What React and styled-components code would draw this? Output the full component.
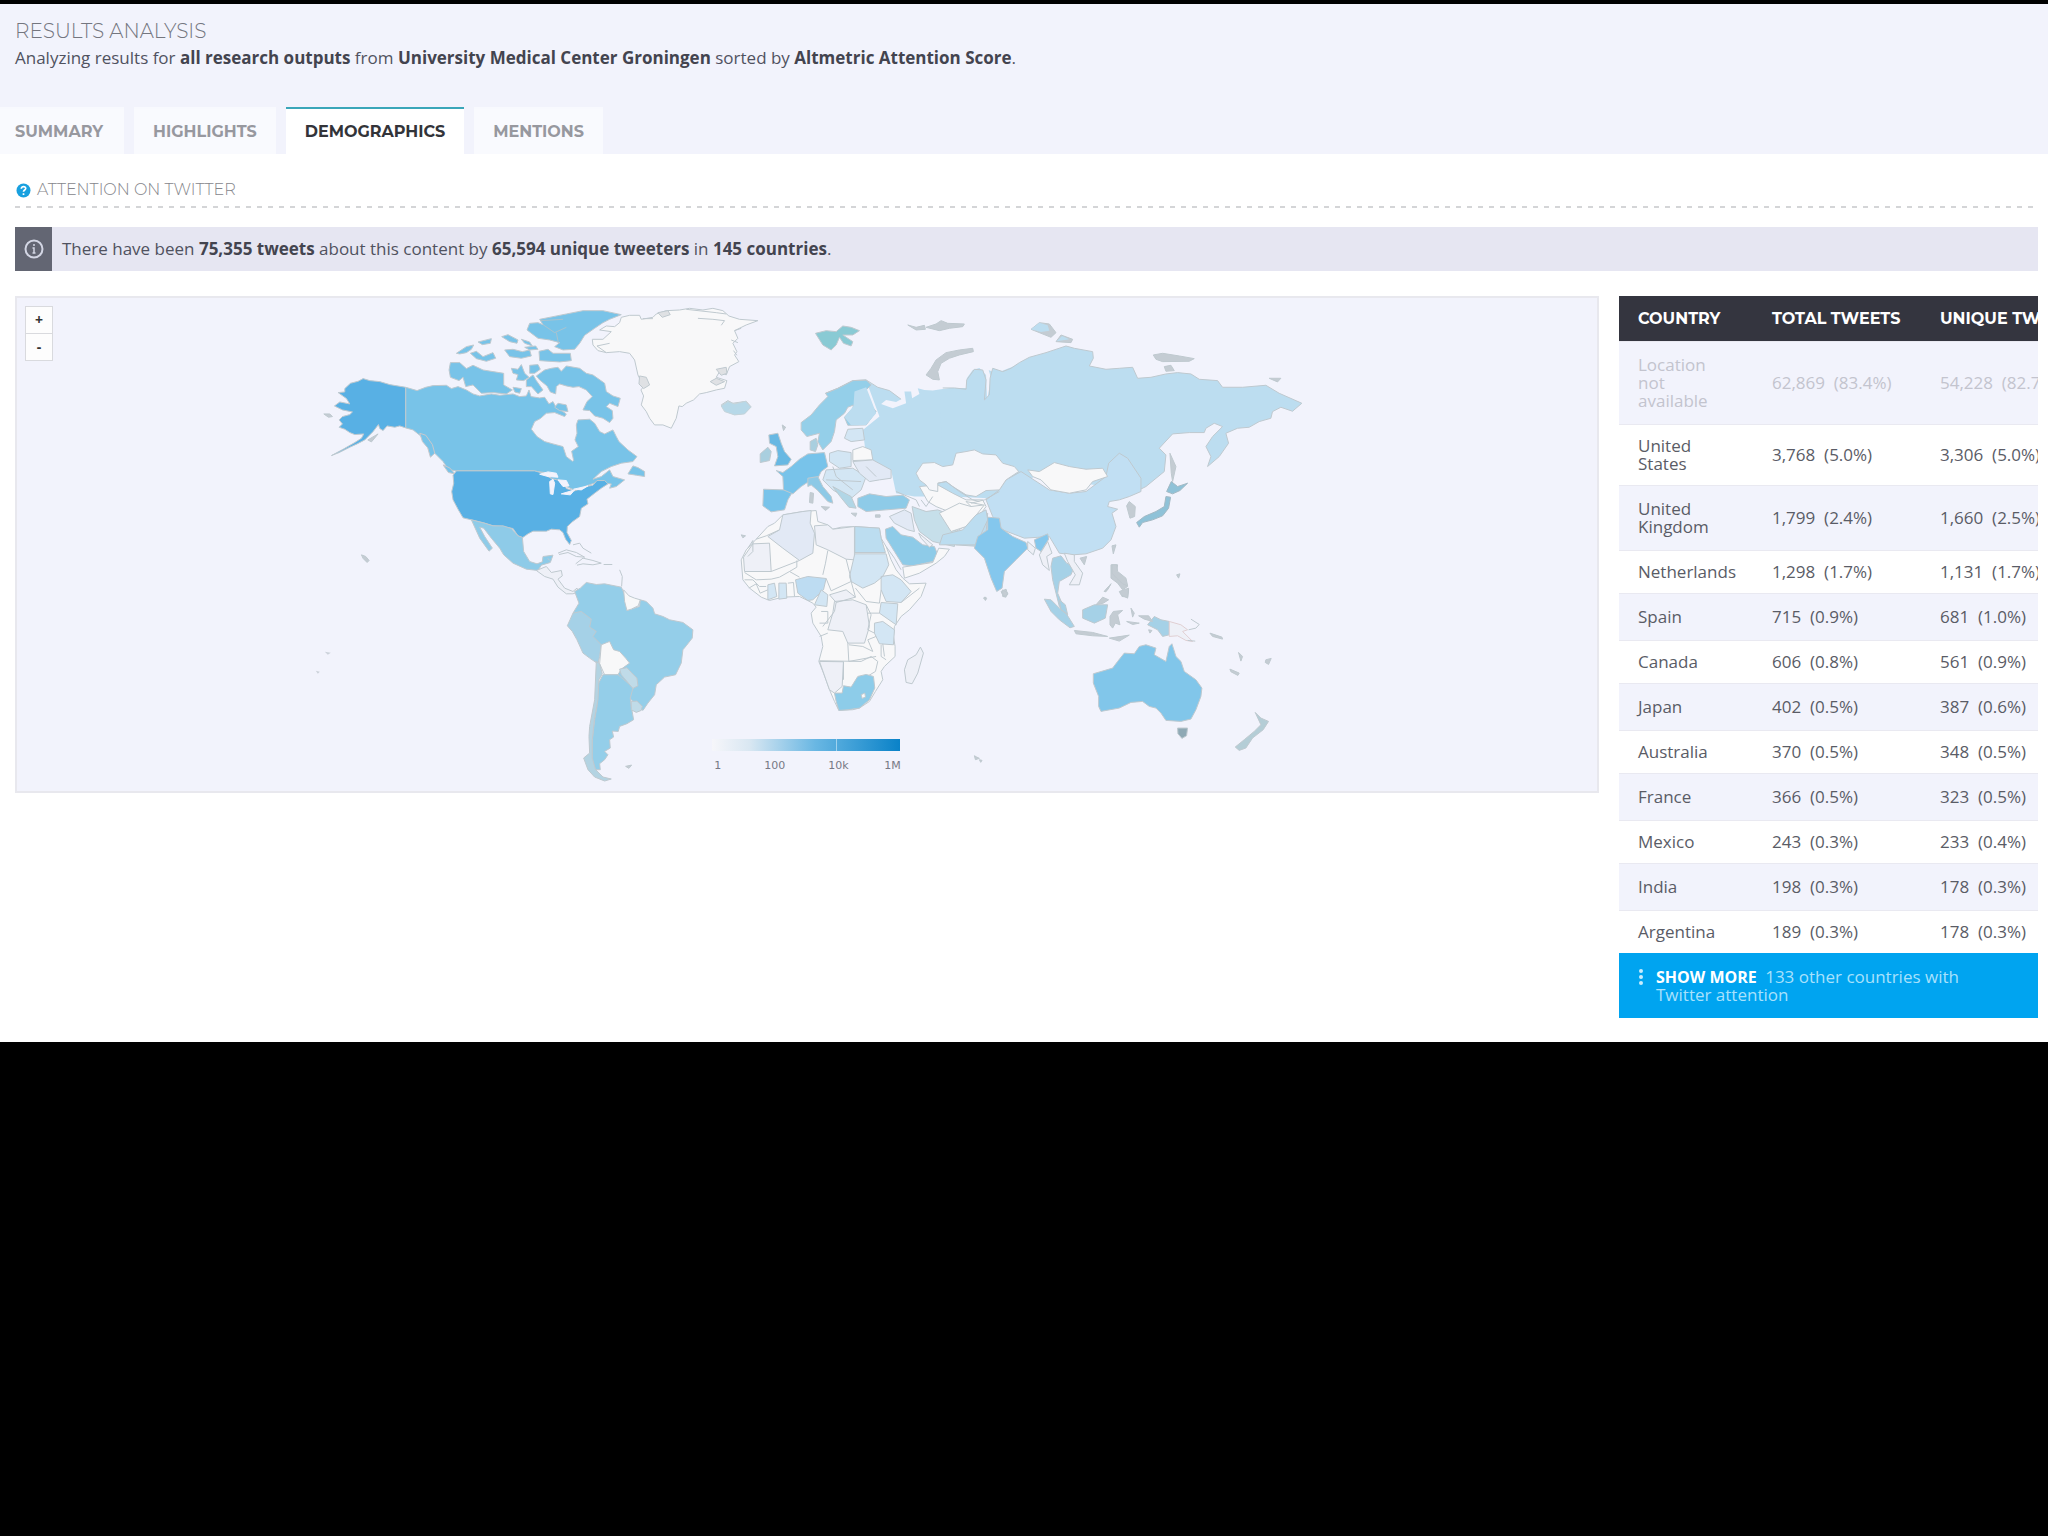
import React from "react";
import styled, { createGlobalStyle, css } from "styled-components";

const GlobalStyle = createGlobalStyle`
  *, *::before, *::after { box-sizing: border-box; }
  body {
    margin: 0;
    background: #000;
    color: #50525f;
    font-family: "Open Sans", "Noto Sans", sans-serif;
    font-size: 17px;
  }
`;

const display = css`
  font-family: Montserrat, Inter, "Open Sans", sans-serif;
`;

const Page = styled.div`
  margin-top: 4px;
  background: #fff;
`;

const Header = styled.header`
  background: #f2f3fc;
`;

const Intro = styled.div`
  padding: 14px 15px 35px;
`;

const Title = styled.h1`
  ${display}
  margin: 0;
  font-size: 20px;
  line-height: 26px;
  font-weight: 300;
  color: #74767f;
`;

const Text = styled.p`
  margin: 0;
  font-size: 17px;
  line-height: 28px;
  strong { font-weight: 700; color: #43444f; }
`;

const Tabs = styled.nav`
  display: flex;
  gap: 10px;
`;

const Tab = styled.a`
  ${display}
  height: 47px;
  padding: 0 19px;
  border-top: 2px solid ${(p) => (p.$active ? "#3aa6b9" : "#f8f9fe")};
  background: ${(p) => (p.$active ? "#fff" : "#f9fafe")};
  color: ${(p) => (p.$active ? "#333439" : "#97989f")};
  font-size: 16px;
  line-height: 45px;
  font-weight: 700;
  text-decoration: none;
  &:first-child { padding-left: 15px; padding-right: 21px; }
`;

const Main = styled.main`
  padding: 24px 10px 24px 15px;
`;

const SectionTitle = styled.h2`
  ${display}
  display: flex;
  align-items: center;
  gap: 6px;
  margin: 0;
  padding: 0 1px 4px;
  font-size: 16px;
  line-height: 24px;
  font-weight: 300;
  color: #85868b;
`;

const Divider = styled.div`
  height: 2px;
  background: repeating-linear-gradient(90deg, #d4d5d7 0 5px, transparent 5px 11px);
`;

const Notice = styled.div`
  display: flex;
  height: 44px;
  margin: 19px 0 25px;
  background: #e6e6f2;
`;

const NoticeBadge = styled.span`
  display: grid;
  place-items: center;
  width: 37px;
  background: #636673;
`;

const NoticeText = styled(Text)`
  padding: 8px 10px;
`;

const Columns = styled.div`
  display: grid;
  grid-template-columns: minmax(0, 1fr) 419px;
  gap: 20px;
  align-items: start;
`;

const MapPanel = styled.section`
  position: relative;
  background: #f2f3fc;
  border: 2px solid #e8e8ee;
  > svg { display: block; width: 100%; height: auto; }
`;

const ZoomControls = styled.div`
  position: absolute;
  top: 8px;
  left: 8px;
  display: flex;
  flex-direction: column;
`;

const ZoomButton = styled.button`
  width: 28px;
  height: 28px;
  margin-bottom: -1px;
  padding: 0;
  border: 1px solid #d9dade;
  background: #fdfdfd;
  color: #333;
  font: 700 14px/24px "Open Sans", sans-serif;
`;

const TablePanel = styled.section`
  overflow: hidden;
`;

const Table = styled.table`
  width: 480px;
  table-layout: fixed;
  border-collapse: collapse;
  line-height: 18px;
`;

const HeadCell = styled.th`
  ${display}
  width: ${(p) => p.$width};
  height: 45px;
  padding: 0 0 0 19px;
  background: #34353f;
  color: #fff;
  font-size: 16px;
  font-weight: 700;
  text-align: left;
  white-space: nowrap;
`;

const Row = styled.tr`
  color: ${(p) => (p.$muted ? "#c3c4ce" : "#5a5c66")};
  background: #fff;
  > * { padding: 12px 0 12px 19px; }
  &:nth-child(odd) {
    background: #f2f3fc;
    box-shadow: inset 0 1px #e9e9f1, inset 0 -1px #e9e9f1;
    > * { padding: 15px 0 15px 19px; }
  }
`;

const NameCell = styled.th`
  font-weight: 400;
  text-align: left;
  span { display: block; width: 90px; }
`;

const ValueCell = styled.td`
  white-space: pre;
`;

const ShowMore = styled.button`
  display: flex;
  align-items: flex-start;
  gap: 12px;
  width: 100%;
  padding: 15px 40px 14px 19px;
  border: 0;
  background: #00a4f0;
  color: #a8e1fc;
  font: 400 17px/18px "Open Sans", sans-serif;
  text-align: left;
  strong { margin-right: 4px; color: #fff; font-size: 16px; font-weight: 700; }
  svg { flex: none; margin-top: 1px; }
`;

const Legend = styled.div`
  position: absolute;
  left: 44%;
  bottom: 18px;
  width: 188px;
`;

const LegendBar = styled.div`
  display: flex;
  height: 12px;
  background: linear-gradient(90deg, #f6f6fa, #d9e7f2 20%, #69b7e3 55%, #0a82c8);
  &::before {
    content: "";
    width: 125px;
    border-right: 1px solid #9fd2ee;
  }
`;

const LegendLabels = styled.div`
  display: grid;
  grid-template-columns: 50px 64px 56px auto;
  padding: 8px 0 0 2px;
  color: #777985;
  font: 11px/14px "DejaVu Sans", sans-serif;
`;

const C = {
  us: "#58b0e4", canada: "#78c3e8", mexico: "#8ecbe8", brazil: "#94cee9", peru: "#a5d1e7",
  russia: "#bcddf0", china: "#c1dff3", india: "#84c7ed", aus: "#81c6ea", spain: "#78c3ea",
  none: "#f8f8f9", pale: "#eef0f7", faint: "#e2e9f5", light: "#d3e6f4", mid: "#bcddf0", grey: "#c4ccd3",
  water: "#f2f3fc", uk: "#68b8e3",
};

/* Each group is drawn on a grid three times finer than the map itself. */
const GROUPS = [
  { at: [300, 290], shapes: [
    [C.us, "M135 296L152 280L175 274L190 266L210 272L240 275L270 284L318 292V414L300 408L285 412L262 408L250 422L240 416L236 404L220 425L195 450L172 462L150 472L118 488L95 497L130 478L165 458L185 445L192 432L165 434L150 428L135 418L118 412L128 402L118 390L128 380L150 374L158 366L128 360L104 348L120 336L150 342L140 326L115 308L135 306Z"],
    [C.canada, "M318 292L352 302L378 292L400 287L440 286L455 296L475 290L500 300L520 312L540 318L575 312L600 316L640 312L660 320L680 318L688 300L694 320L720 324L735 322L748 342L760 335L768 350L800 372L795 380L765 368L740 370L722 386L705 395L695 418L712 440L735 455L760 462L790 470L800 500L818 514L822 512L816 484L836 470L826 450L832 430L830 405L835 390L870 388L885 400L900 425L915 432L940 420L950 440L958 455L985 480L1012 500L1000 515L965 520L935 530L905 545L880 568L905 560L930 540L940 560L975 570L950 590L930 595L935 582L915 580L890 578L860 588L830 603L800 590L760 570L735 548L700 543H470L450 540L440 530L430 515L405 490L388 460L365 440L340 420L318 414Z"],
    [C.canada, "M1000 528L1015 533L1035 545L1035 560L1010 556L985 552Z"],
    [C.canada, "M735 240L755 235L775 232L785 244L800 228L840 235L860 250L880 255L915 280L920 305L940 318L962 325L955 350L930 340L920 350L938 362L940 385L930 398L910 385L885 378L870 362L850 360L862 335L878 320L860 300L838 290L820 292L800 288L780 282L770 290L768 312L752 306L742 288L720 270L710 258Z"],
    [C.canada, "M452 218L480 218L500 236L520 226L550 240L580 245L612 250L612 285L638 300L620 312L580 308L545 310L520 285L498 290L490 262L478 272L452 262L448 240Z"],
    [C.canada, "M635 235L655 238L665 224L675 250L688 262L672 272L650 270L655 254L640 250ZM690 226L715 224L722 238L705 250L690 250ZM680 270L700 255L710 272L730 300L715 312L695 290L680 290ZM640 292L665 296L660 310L645 306ZM775 340L800 345L805 365L780 362L765 352Z"],
    [C.canada, "M720 88L760 80L800 72L850 62L910 62L965 74L930 88L910 98L885 115L855 136L840 160L825 178L790 180L765 170L780 158L750 150L715 145L682 120L690 100L715 98L730 104ZM718 184L745 178L760 190H812L815 212L780 216L720 212Z"],
    ["none", "M722 92L790 88M730 104L765 128L800 112M770 128L776 158", "#a9c3cf"],
    [C.canada, "M470 190L500 170L522 165L515 178L500 188L480 192ZM535 156L575 146L572 160L548 164ZM512 190L530 184L550 200L580 188L588 205L560 214L530 206ZM606 140L625 134L655 150L652 160L630 155ZM665 148L690 156L698 168L675 160ZM615 180L640 178L668 185L690 180L695 198L665 205L630 200ZM675 172L708 168L715 178L690 180Z"],
    [C.canada, "M360 430L378 436L398 464L405 490L392 502L384 474L368 455ZM430 525L450 534L466 552L446 548Z", "#c9c8cc"],
    [C.us, "M470 543H705L730 550L755 566L790 574L800 596L825 603L860 590L880 586L892 572L915 572L925 582L905 595L885 610L862 628L865 642L845 655L840 680L818 696L803 710L802 728L815 752L810 764L798 748L790 728L780 720L755 718L740 724L700 724L685 732L668 744L655 738L640 716L610 710L580 708L555 700L515 690L490 684L476 660L460 630L456 605L462 580L460 556Z"],
    [C.mexico, "M515 690L555 700L580 708L610 708L635 716L655 738L668 742L672 785L690 815L712 822L728 816L730 800L760 796L752 818L725 826L715 842L680 838L640 820L612 795L600 775L575 745L552 715L540 712L555 740L578 775L568 784L540 745Z"],
    [C.water, "M720 553L745 546L770 550L775 562L745 560ZM750 575L760 568L765 580L760 614L752 612ZM775 570L800 572L808 588L790 590ZM785 612L825 600L812 615ZM822 598L865 588L845 600Z", C.water],
    [C.pale, "M710 842L740 830L755 848L785 842L788 858L775 868L795 895L820 905L832 895L838 906L820 912L800 912L775 892L760 868L735 860Z"],
    ["none", "M775 790L800 780L830 788L855 802L830 800L805 788L778 794M828 822L850 805L880 812L905 820L880 825L850 822L832 826M820 765L840 760L850 775L875 790M912 824H938M960 840L968 860L966 890M745 806L750 812"],
    [C.grey, "M72 372L90 372L98 380L86 382ZM185 795L198 800L208 812L202 818L190 806ZM204 450L235 432L215 456Z"],
  ]},
  { at: [540, 290], shapes: [
    [C.none, "M245 82L270 76L300 76L305 88L340 82L350 72L380 62L420 60L450 55L490 60L520 55L550 62L568 78L600 88L655 92L620 105L585 122L595 145L580 160L592 185L585 195L598 215L570 230L560 255L540 245L530 262L562 272L555 295L530 300L500 308L480 312L462 330L440 340L428 350L418 348L410 385L395 415L370 405L345 405L330 385L320 365L305 345L312 318L304 300L312 290L295 255L285 210L270 190L240 185L200 188L175 182L160 165L158 148L190 148L215 125L180 120L200 108L225 110L240 98Z"],
    ["#dfe1e4", "M355 68L385 62L392 74L368 82ZM300 258L320 262L330 285L312 296L298 282ZM530 238L560 232L562 250L545 256ZM512 275L530 265L555 275L530 286Z"],
    ["none", "M200 188L172 168L210 160M310 86H340M475 85L520 88L555 92L545 106M440 58L530 68L560 72M575 150L595 158M582 182L592 196M585 122L605 115"],
    ["#d5e6ea", "M545 345L565 332L580 340L620 334L634 350L615 370L585 374L560 362Z"],
    [C.grey, "M728 405L738 412L732 420Z"],
  ]},
  { at: [540, 540], shapes: [
    [C.brazil, "M105 155L122 145L140 128L170 134L195 132L245 142L258 170L262 212L300 200L302 180L320 185L340 205L345 222L370 230L390 240L430 248L460 270L458 295L440 318L430 330L425 370L408 405L375 412L350 435L345 465L325 490L310 512L285 490L265 470L200 330L165 300L100 220L118 190Z"],
    [C.peru, "M100 220L125 215L155 238L150 262L170 275L160 290L185 315L180 350L175 372L150 355L130 340L112 300L98 275L83 258L92 238Z"],
    [C.none, "M185 315L210 305L222 330L240 335L258 355L270 370L245 388L235 405H195L180 372ZM252 150L268 168L285 175L302 180L296 198L275 208L262 212L255 185Z"],
    [C.brazil, "M190 405H235L265 430L280 445L272 475L275 500L282 540L262 552L240 560L236 575L218 574L222 592L210 600L212 625L195 635L205 645L195 660L180 672L182 690L165 690L156 650L158 600L165 540L172 500L172 440Z"],
    ["#c0dbe8", "M240 388L262 384L275 398L292 415L295 438L280 446L266 430L245 405ZM275 485L292 484L308 500L305 512L290 518L275 510Z"],
    ["#b3d3e2", "M170 365L180 372L188 402L178 420L175 480L164 540L158 600L158 655L168 690L190 712L215 718L195 724L165 712L145 690L132 655L150 640L148 590L150 560L165 480Z"],
    [C.grey, "M258 680L276 676L268 686Z"],
  ]},
  { at: [720, 480], shapes: [
    [C.none, "M190 105L250 95L290 92L295 125L325 135L340 148L365 142L405 140L480 145L485 175L500 200L515 240L530 270L550 295L570 312L620 310L605 350L570 390L545 410L525 440L522 470L527 500V530L495 560L485 575L490 600L468 635L450 665L420 685L400 690L358 692L345 665L330 630L312 580L298 545L310 500L305 470L280 430L275 400L290 382L280 370L240 350L190 352L150 362L125 352L90 325L70 300L65 240L80 210L110 178L145 140L165 130Z"],
    [C.faint, "M190 105L250 95L275 92L272 130L285 160L280 220L240 242L190 205L145 170L180 150Z"],
    [C.pale, "M285 138L325 135L340 148L405 140V240L380 238L325 210L290 195ZM72 232L100 192L150 190L155 275H75ZM345 365L400 360L440 375L450 440L435 490L385 490L370 455L325 450L340 400ZM300 545L372 546L368 620L345 640L330 630ZM330 345L380 330L408 352L350 368Z"],
    [C.mid, "M406 140L480 145L485 175L498 218H406Z"],
    [C.light, "M406 222H500L508 255L490 290L465 310L430 325L395 305L390 290ZM485 290L520 285L545 300L575 335L545 368L500 365L485 330ZM485 368L535 372L530 435L480 400ZM465 430L490 425L525 450L522 495L480 492L465 460Z"],
    ["#bddcf2", "M228 300L265 290L320 296L312 330L280 360L265 362L235 340Z"],
    [C.light, "M305 330L325 345L322 380L285 375ZM145 315L165 310L172 350L145 360ZM178 310H200L202 355L178 358Z"],
    ["none", "M180 150L140 168L110 178M155 275L240 242M75 278L110 300L155 298L180 292L210 275L232 262V242M210 275L240 292M325 212L318 250L310 285M380 238L392 285L395 305L335 333L320 296M395 305L408 352M408 325L440 365L480 370L485 330M75 300L100 300L120 320L140 320M88 325L110 312L122 340L145 330M205 310L222 308L225 350M305 395H325V430L300 430M350 368L345 395L310 440M300 470L325 460M385 490L388 545L470 530M388 495L430 500L460 515L445 480L470 470M300 543L425 545M372 546V600M425 545L455 530L475 545L468 575L435 595M490 492L495 530M545 368L600 325M440 375L455 405L445 450L465 460M445 400H480M485 495L485 530L500 540M500 200L525 235L545 270M85 205L100 182V215L85 230"],
    ["#8dcce9", "M345 640L368 640L372 618L395 622L415 590L440 584L462 590L466 625L450 660L420 685L385 690L358 692L350 665Z"],
    [C.none, "M425 645L436 640L438 652L428 656Z"],
    [C.pale, "M603 502L612 520L595 580L578 612L560 608L555 570L565 540L590 525Z"],
    [C.mexico, "M498 148L520 140L545 165L580 172L610 195L645 200L655 225L640 245L580 258L550 255L525 215L500 175Z"],
    [C.none, "M550 262L640 248L658 205L690 208L675 230L650 250L600 280L555 295Z"],
    [C.grey, "M65 165L78 168L70 174ZM765 828L772 832L780 836L768 840ZM795 352L802 356L798 362ZM850 335L862 342L860 352L850 350Z"],
  ]},
  { at: [720, 300], shapes: [
    [C.russia, "M440 242L475 262L510 272L545 298L530 306L500 300L485 312L520 325L560 310L555 275L575 275L578 295L600 282L595 265L615 270L640 272L690 264L745 264L742 235L760 210L780 204L800 225L803 300L815 235L808 210L830 220L855 210L905 190L960 500L900 600L700 590L585 590L530 580L515 510L440 470L430 390L480 350Z", "none"],
    ["#94cfe9", "M245 368L275 345L300 315L325 290L318 280L355 265L400 242L440 240L455 255L440 270L450 310L470 335L440 375L385 376L375 352L400 325L402 315L385 322L375 340L350 360L345 395L335 425L310 450L295 425L300 400L262 410L245 390Z"],
    [C.mid, "M405 275L440 262L455 300L470 340L440 375L395 376L375 352L402 318Z", "none"],
    ["none", "M318 280L355 265L400 242L440 240L475 262L510 272L545 298"],
    [C.light, "M385 388L430 385L435 420L395 425L375 415ZM330 460L355 452L395 458L395 500L360 505L330 485Z"],
    [C.light, "M320 510L400 505L440 530L425 570L390 600L340 570L310 540Z"],
    [C.none, "M400 450L430 440L455 450L460 480L400 482Z"],
    [C.faint, "M400 485L460 480L515 510L515 535L480 540L450 545L420 520Z"],
    [C.spain, "M132 568L195 570L218 578L205 600L195 630L155 636L130 618Z"],
    [C.spain, "M170 512L190 518L215 500L240 478L265 462L315 458L325 500L305 515L295 535L260 550L245 560L220 582L192 570L190 530Z"],
    ["#8dc9e6", "M265 535L295 530L310 560L335 590L340 610L325 605L295 572L275 555L265 560Z"],
    [C.uk, "M148 405L175 400L185 430L195 455L215 478L205 495L165 498L175 470L170 440L150 430Z"],
    ["#a9cfdf", "M122 462L145 442L155 455L150 482L122 488ZM272 425L290 415L295 435L288 455L272 450Z"],
    ["#8ecbe8", "M415 595L450 582L500 590L550 586L570 600L560 625L500 630L440 635L415 620Z"],
    ["#b1d6e6", "M340 560L395 590L410 625L388 622L362 590Z"],
    ["#89cad4", "M288 100L320 92L350 95L370 78L395 82L420 92L400 105L370 105L400 125L395 138L372 130L360 112L350 135L335 150L310 135Z"],
    [C.grey, "M565 75L590 82L615 76L618 88L590 90ZM620 82L650 72L665 62L685 70L735 72L730 80L690 85L660 92ZM620 225L635 205L650 180L680 158L720 150L760 145L762 155L720 165L690 175L665 190L655 215L660 240L640 238Z"],
    [C.grey, "M272 578L282 580L280 610L270 608ZM305 620L330 622L318 632ZM395 640H412L408 650ZM468 645H482V652H468ZM190 378L198 382L192 392Z"],
    ["#b7d8e8", "M5 318L25 305L45 312L78 304L94 322L75 342L45 345L15 335Z", "#c5d3d9"],
    [C.none, "M600 560L655 555L700 580L740 600L790 600L800 620L775 655L710 695L700 640L650 620L625 605Z"],
    ["none", "M740 605L760 625M640 590L620 620L605 600M320 540L425 545M340 500L350 530L400 570M440 500L470 530M530 575L590 600L600 620"],
    ["#c6dfea", "M578 620L620 635L655 630L695 645L710 695L705 740L640 725L600 695L585 660Z"],
    [C.faint, "M510 650L555 630L575 640L585 695L565 690L525 670Z"],
    [C.mid, "M705 700L740 690L775 660L805 640L800 700L780 740L710 735Z"],
    [C.pale, "M598 700L640 735L630 742L605 715Z"],
  ]},
  { at: [960, 300], shapes: [
    [C.russia, "M-60 300L-15 264L20 268L22 240L45 208L70 210L80 240L75 300L90 285L92 235L100 205L130 215L155 205L180 188L210 172L260 158L320 138L345 145L400 155L402 175L390 198L440 208L480 205L520 202L535 235L575 232L620 222L655 218L695 222L720 238L775 242L790 262L850 262L920 256L960 280L1028 310L1000 334L965 322L940 335L935 355L900 365L870 382L835 385L800 400L808 430L780 470L745 500L755 470L740 440L760 410L790 380L765 370L740 385L735 398L690 398L640 402L600 445L620 465L615 515L560 560L530 575L440 560L300 540L185 520L110 465L20 450L-50 455Z", "none"],
    ["none", "M-50 264L-15 264L20 268L22 240L45 208L70 210L80 240L75 300L90 285L92 235L100 205L130 215L155 205L180 188L210 172L260 158L320 138L345 145L400 155L402 175L390 198L440 208L480 205L520 202L535 235L575 232L620 222L655 218L695 222L720 238L775 242L790 262L850 262L920 256L960 280L1028 310L1000 334L965 322L940 335L935 355L900 365L870 382L835 385L800 400L808 430L780 470L745 500L755 470L740 440L760 410L790 380L765 370L740 385L735 398L690 398L640 402L600 445L620 465L615 515L560 560L530 575"],
    [C.china, "M80 600L120 570L140 540L185 515L270 570L330 580L380 575L440 530L448 490L480 460L505 475L545 535L545 575L510 590L480 600L450 605L445 620L475 628L458 640L470 680L455 720L430 745L380 762L340 765L300 760L270 710L195 715L130 690L100 650Z"],
    [C.none, "M205 510L240 515L285 488L330 500L380 508L430 505L445 530L400 545L380 570L330 580L275 570L245 540L220 530Z"],
    ["#f5f6fa", "M-130 520L-110 490L-75 488L-50 500L-20 495L-10 460L20 455L45 450L70 462L110 465L130 490L165 500L178 515L140 540L120 570L80 572L50 590L20 585L-20 560L-40 545L-65 550V575L-90 570L-100 555L-120 540Z"],
    [C.none, "M-60 640L0 610L35 620L75 615L55 640L20 680L-25 695Z"],
    ["none", "M-65 550L-40 545L0 575L40 600L60 605M35 610L75 600L120 575M20 605L70 615"],
    [C.mid, "M-50 705L10 690L50 645L80 630L85 660L50 735L10 735L-60 735Z"],
    [C.india, "M85 652L120 655L125 685L160 710L200 728L205 745L170 780L135 815L128 865L112 875L95 835L75 775L45 745L55 710L85 690ZM225 720L265 702L268 718L245 755L230 745Z"],
    [C.pale, "M205 725L228 745L222 765L205 750ZM265 725L278 760L262 770L270 812L250 795L240 765Z"],
    [C.peru, "M280 775L305 768L322 790L345 800L335 825L300 845L295 880L310 915L325 955L300 920L280 840L275 800Z"],
    [C.pale, "M315 760L345 765L345 785L370 820L360 855L330 855L348 825L325 785Z"],
    ["#8fc2d8", "M636 545L655 560L685 550L662 572L640 582L622 575ZM620 590L634 592L628 625L610 648L580 660L550 668L540 682L532 668L555 650L590 635L615 620Z", "#a3b9c4"],
    [C.grey, "M632 460L650 500L640 545L636 520ZM510 605L528 620L526 650L512 655L502 618ZM458 738L470 735L462 762ZM362 775L382 770L375 795ZM455 795L475 795L470 825L492 835L505 860L490 870L475 850L455 835ZM485 875L508 870L505 892L488 890ZM435 875L455 852L440 876ZM215 88L240 68L270 72L290 98L275 112L245 100ZM290 125L305 105L340 118L335 128ZM582 165L610 160L660 168L705 176L690 184L610 185L590 178ZM615 200L635 196L645 212L620 214ZM930 235L965 235L955 246ZM125 875L140 868L145 885L132 890ZM72 895L80 892L78 900Z"],
    [C.mid, "M215 88L240 68L265 76L270 92L245 96ZM292 124L308 108L330 118Z", "none"],
  ]},
  { at: [980, 480], shapes: [
    [C.aus, "M342 582L400 565L415 545L435 520L465 522L480 500L500 495L530 505L525 525L560 545L570 500L578 492L590 530L605 545L615 575L650 600L668 625L665 650L650 690L635 718L605 725L560 722L545 700L530 685L510 680L490 665L455 668L420 685L365 695L358 680L358 650L342 610Z"],
    ["#8fa9b5", "M595 745H625L622 768L608 776L596 762Z"],
    ["#b4cdd6", "M828 698L845 715L868 725L852 750L820 775L800 805L780 812L768 802L795 780L825 755L845 735Z"],
    [C.peru, "M195 358L215 360L240 385L260 400L285 440L272 444L240 420L215 395ZM310 390L345 375L385 375L378 415L345 430L310 415ZM525 410L545 420L570 425L570 465L550 470L535 450L505 435ZM240 360L258 375L265 405L245 390Z"],
    [C.grey, "M285 452L340 458L385 470L340 468L290 462ZM350 375L370 352L388 360L372 370ZM392 410L402 395L430 392L415 405L422 435L408 430L400 445L392 435ZM455 385L465 400L460 412ZM478 408L508 408L520 425L495 418ZM390 475L410 472L450 466L420 484ZM442 425L480 430L460 434ZM398 255L412 255L415 275L440 295L445 318L430 312L412 295L398 280ZM420 335L448 325L445 355L425 345ZM375 335L395 312L385 330ZM508 450L518 452L512 460ZM692 460L728 472L730 478L700 470ZM778 518L790 530L785 544ZM752 568L780 580L776 587L755 576ZM860 540L876 536L868 554L858 548ZM70 330L86 340L78 350L70 345ZM0 840L8 842L4 848ZM592 285L602 282L598 295Z"],
    [C.pale, "M570 425L605 435L625 450L610 455L640 485L620 482L595 468L570 470Z", "#e0cfd2"],
    ["none", "M635 418L660 434L650 445L628 450M625 482L648 484"],
  ]},
];

function WorldMap() {
  return (
    <svg viewBox="17 298 1581 493" role="img" aria-label="Tweets by country">
      {GROUPS.map(({ at, shapes }) => (
        <g key={at.join()} transform={`translate(${at[0]} ${at[1]}) scale(0.33333)`} strokeLinejoin="round">
          {shapes.map(([fill, d, stroke = "#bfc9cf"], i) => (
            <path key={i} d={d} fill={fill} stroke={stroke} strokeWidth="3" />
          ))}
        </g>
      ))}
      <g fill="#ccd2da">
        <path d="M316 671l4 1-2 2zM325 652l6 1-3 2z" />
      </g>
    </svg>
  );
}

const ROWS = [
  ["Location not available", "62,869  (83.4%)", "54,228  (82.7%)"],
  ["United States", "3,768  (5.0%)", "3,306  (5.0%)"],
  ["United Kingdom", "1,799  (2.4%)", "1,660  (2.5%)"],
  ["Netherlands", "1,298  (1.7%)", "1,131  (1.7%)"],
  ["Spain", "715  (0.9%)", "681  (1.0%)"],
  ["Canada", "606  (0.8%)", "561  (0.9%)"],
  ["Japan", "402  (0.5%)", "387  (0.6%)"],
  ["Australia", "370  (0.5%)", "348  (0.5%)"],
  ["France", "366  (0.5%)", "323  (0.5%)"],
  ["Mexico", "243  (0.3%)", "233  (0.4%)"],
  ["India", "198  (0.3%)", "178  (0.3%)"],
  ["Argentina", "189  (0.3%)", "178  (0.3%)"],
];

const TABS = ["SUMMARY", "HIGHLIGHTS", "DEMOGRAPHICS", "MENTIONS"];

export default function App() {
  return (
    <>
      <GlobalStyle />
      <Page>
        <Header>
          <Intro>
            <Title>RESULTS ANALYSIS</Title>
            <Text>
              Analyzing results for <strong>all research outputs</strong> from{" "}
              <strong>University Medical Center Groningen</strong> sorted by{" "}
              <strong>Altmetric Attention Score</strong>.
            </Text>
          </Intro>
          <Tabs>
            {TABS.map((name) => (
              <Tab key={name} href={`#${name.toLowerCase()}`} $active={name === "DEMOGRAPHICS"}>
                {name}
              </Tab>
            ))}
          </Tabs>
        </Header>
        <Main>
          <SectionTitle>
            <svg width="15" height="15" viewBox="0 0 15 15" aria-hidden="true">
              <circle cx="7.5" cy="7.5" r="7" fill="#18a0df" />
              <path d="M5.3 5.7c0-3 4.6-2.7 4.4-.2C9.600 7 7.500 7 7.500 8.800M7.500 10.300v1.700" fill="none" stroke="#fff" strokeWidth="1.700" />
            </svg>
            ATTENTION ON TWITTER
          </SectionTitle>
          <Divider />
          <Notice>
            <NoticeBadge>
              <svg width="20" height="20" viewBox="0 0 20 20" fill="none" stroke="#d3d6e4" aria-hidden="true">
                <circle cx="10" cy="10" r="8.500" strokeWidth="2" />
                <path d="M10 5v2M8.500 9H10v5M8.500 14h3" strokeWidth="1.500" />
              </svg>
            </NoticeBadge>
            <NoticeText>
              There have been <strong>75,355 tweets</strong> about this content by{" "}
              <strong>65,594 unique tweeters</strong> in <strong>145 countries</strong>.
            </NoticeText>
          </Notice>
          <Columns>
            <MapPanel>
              <WorldMap />
              <ZoomControls>
                <ZoomButton aria-label="Zoom in">+</ZoomButton>
                <ZoomButton aria-label="Zoom out">-</ZoomButton>
              </ZoomControls>
              <Legend>
                <LegendBar />
                <LegendLabels>
                  <span>1</span>
                  <span>100</span>
                  <span>10k</span>
                  <span>1M</span>
                </LegendLabels>
              </Legend>
            </MapPanel>
            <TablePanel>
              <Table>
                <thead>
                  <tr>
                    <HeadCell $width="134px">COUNTRY</HeadCell>
                    <HeadCell $width="168px">TOTAL TWEETS</HeadCell>
                    <HeadCell>UNIQUE TWEETERS</HeadCell>
                  </tr>
                </thead>
                <tbody>
                  {ROWS.map(([name, total, unique], i) => (
                    <Row key={name} $muted={i === 0}>
                      <NameCell scope="row"><span>{name}</span></NameCell>
                      <ValueCell>{total}</ValueCell>
                      <ValueCell>{unique}</ValueCell>
                    </Row>
                  ))}
                </tbody>
              </Table>
              <ShowMore>
                <svg width="6" height="16" viewBox="0 0 6 16" fill="#c9edfd" aria-hidden="true">
                  <circle cx="3" cy="2" r="2" />
                  <circle cx="3" cy="8" r="2" />
                  <circle cx="3" cy="14" r="2" />
                </svg>
                <span>
                  <strong>SHOW MORE</strong> 133 other countries with Twitter attention
                </span>
              </ShowMore>
            </TablePanel>
          </Columns>
        </Main>
      </Page>
    </>
  );
}
